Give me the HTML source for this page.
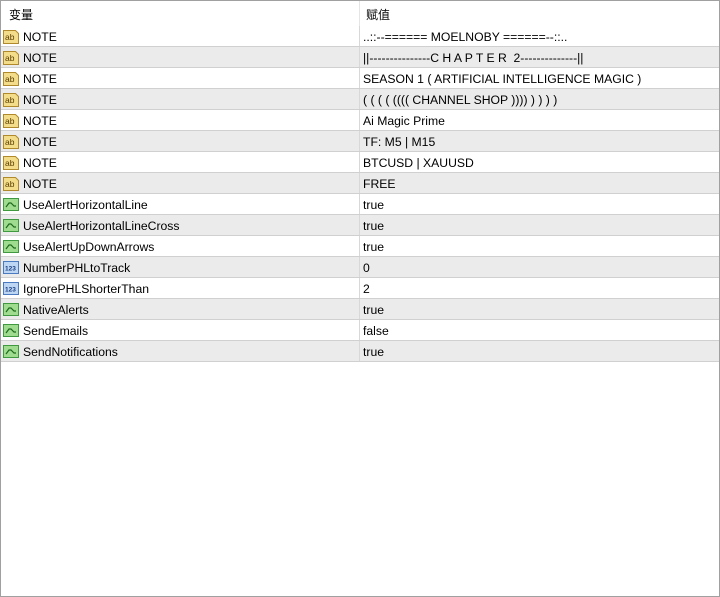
<!DOCTYPE html>
<html><head><meta charset="utf-8"><style>
*{margin:0;padding:0;box-sizing:border-box}
body{width:720px;height:597px;background:#fff;font-family:"Liberation Sans","Noto Sans CJK SC",sans-serif;font-size:12px;color:#000;overflow:hidden}
.wrap{position:absolute;left:0;top:0;width:720px;height:597px;border:1px solid #a0a0a0}
.hdr{position:absolute;left:0;top:0;width:718px;height:25px}
.hdr span{position:absolute;top:5px}
.hdr .d{position:absolute;left:358px;top:0;width:1px;height:25px;background:#e5e5e5}
.row{position:absolute;left:0;width:718px;height:21px;border-bottom:1px solid #d0d0d0}
.row.g{background:#ebebeb}
.row .n{position:absolute;left:22px;top:4px;font-size:12.2px}
.row .v{position:absolute;left:362px;top:4px;font-size:12.2px}
.row .d{position:absolute;left:358px;top:0;width:1px;height:20px;background:#d8d8d8}
.ic{position:absolute;left:2px;top:3px;width:16px;height:15px}
</style></head><body><div class="wrap">
<div class="hdr"><span style="left:8px">变量</span><span style="left:365px">赋值</span><div class="d"></div></div>
<div id="rows"></div>
</div>
<script>
var ab='<svg class="ic" viewBox="0 0 16 15"><path d="M0.5 1.5h12l3 3v10h-15z" fill="#f3dd8a" stroke="#b08a2a"/><text x="2" y="11" font-size="8.5" font-family="Liberation Sans" fill="#5a3d00">ab</text></svg>';
var bl='<svg class="ic" viewBox="0 0 16 15"><path d="M0.5 1.5h15v12h-15z" fill="#9fdc8f" stroke="#3f9a3f"/><path d="M3 10l3-4h2l3 3h2" fill="none" stroke="#1d6a1d" stroke-width="1.2"/></svg>';
var nm='<svg class="ic" viewBox="0 0 16 15"><path d="M0.5 1.5h15v12h-15z" fill="#bcd6f4" stroke="#4a7ac0"/><text x="2" y="10.5" font-size="6.5" font-weight="bold" font-family="Liberation Sans" fill="#1d3f80">123</text></svg>';
var d=[[ab,'NOTE','..::--====== MOELNOBY ======--::..'],[ab,'NOTE','||---------------C H A P T E R&nbsp; 2--------------||'],[ab,'NOTE','SEASON 1 ( ARTIFICIAL INTELLIGENCE MAGIC )'],[ab,'NOTE','( ( ( ( (((( CHANNEL SHOP )))) ) ) ) )'],[ab,'NOTE','Ai Magic Prime'],[ab,'NOTE','TF: M5 | M15'],[ab,'NOTE','BTCUSD | XAUUSD'],[ab,'NOTE','FREE'],[bl,'UseAlertHorizontalLine','true'],[bl,'UseAlertHorizontalLineCross','true'],[bl,'UseAlertUpDownArrows','true'],[nm,'NumberPHLtoTrack','0'],[nm,'IgnorePHLShorterThan','2'],[bl,'NativeAlerts','true'],[bl,'SendEmails','false'],[bl,'SendNotifications','true']];
var h='';d.forEach(function(r,i){h+='<div class="row'+(i%2?' g':'')+'" style="top:'+(25+i*21)+'px">'+r[0]+'<span class="n">'+r[1]+'</span><div class="d"></div><span class="v">'+r[2]+'</span></div>';});
document.getElementById('rows').innerHTML=h;
</script>
</body></html>
